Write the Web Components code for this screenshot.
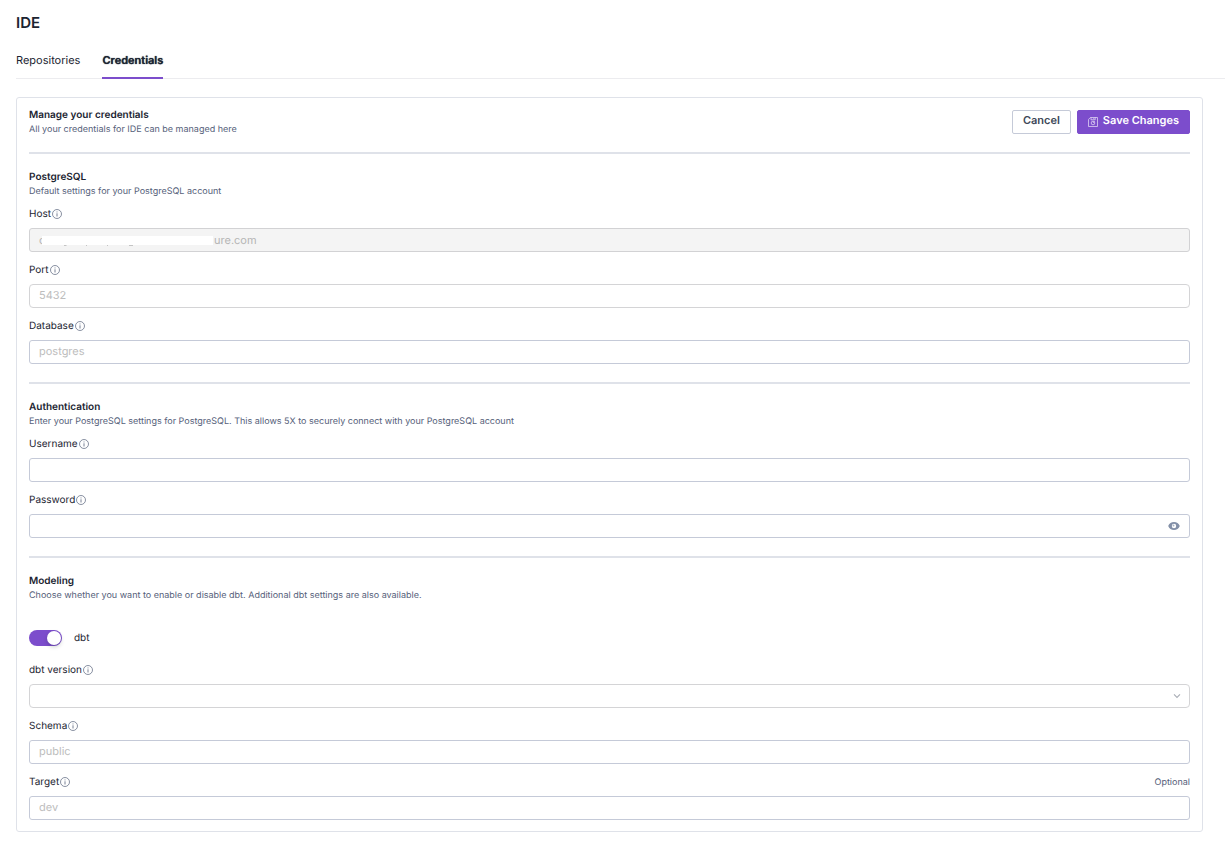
<!DOCTYPE html>
<html lang="en">
<head>
<meta charset="utf-8">
<meta name="viewport" content="width=device-width, initial-scale=1">
<title>IDE</title>
<style>
  body {
    margin: 0;
    background: #fff;
    color: #1b2431;
    font: 11px/14px Inter, "Liberation Sans", sans-serif;
    text-rendering: geometricPrecision;
    --accent: #7c4dcc;
    --muted: #56617a;
    --rule: #dfe2e9;
    --border: #c5cad8;
  }
</style>
</head>
<body>
<ide-page></ide-page>

<script>
// ide-tabs: page level navigation
class IdeTabs extends HTMLElement {
  constructor() {
    super();
    this.attachShadow({ mode: "open" }).innerHTML = `
      <style>
        :host { display: block; border-bottom: 1px solid #ececef; }
        nav { display: flex; gap: 22px; }
        a {
          color: inherit;
          text-decoration: none;
          line-height: 16px;
          padding: 8px 0 9px;
          margin-bottom: -1px;
          border-bottom: 2px solid transparent;
        }
        a[aria-current] {
          font-weight: 600;
          text-shadow: 0 0 1px currentColor;
          border-color: var(--accent);
        }
      </style>
      <nav>
        <a href="#repositories">Repositories</a>
        <a href="#credentials" aria-current="page">Credentials</a>
      </nav>
    `;
  }
}

// ide-button: default or primary, icon goes in the "icon" slot
class IdeButton extends HTMLElement {
  constructor() {
    super();
    this.attachShadow({ mode: "open" }).innerHTML = `
      <style>
        :host { display: block; }
        button {
          display: flex;
          align-items: center;
          gap: 5px;
          height: 24px;
          box-sizing: border-box;
          padding: 0 10px 4px;
          border: 1px solid var(--border);
          border-radius: 2px;
          background: #fff;
          color: #3d4858;
          font: inherit;
          font-weight: 600;
          text-rendering: inherit;
          cursor: pointer;
        }
        :host([primary]) button {
          background: var(--accent);
          border-color: var(--accent);
          color: #fff;
        }
        ::slotted(svg) { display: block; margin-top: 4px; }
      </style>
      <button type="button"><slot name="icon"></slot><slot></slot></button>
    `;
  }
}

// ide-section: divider, heading and description above a column of fields
class IdeSection extends HTMLElement {
  connectedCallback() {
    this.attachShadow({ mode: "open" }).innerHTML = `
      <style>
        :host { display: block; border-top: 2px solid var(--rule); padding-top: 16px; }
        h2 { margin: 0; font-size: 10px; line-height: 15px; font-weight: 600; }
        p { margin: 0 0 7px; font-size: 9px; line-height: 13px; color: var(--muted); }
        .fields { display: flex; flex-direction: column; gap: 9px; }
      </style>
      <h2>${this.getAttribute("heading")}</h2>
      <p>${this.getAttribute("description")}</p>
      <div class="fields"><slot></slot></div>
    `;
  }
}

// ide-field: labelled text, password or select control
class IdeField extends HTMLElement {
  connectedCallback() {
    this.attachShadow({ mode: "open" }).innerHTML = `
      <style>
        :host { display: block; }
        .top { display: flex; align-items: center; height: 18px; margin-bottom: 5px; }
        label { font-size: 10px; }
        .info { display: block; margin-left: 1px; color: var(--muted); }
        .optional { margin-left: auto; font-size: 9px; line-height: 16px; padding-top: 2px; color: var(--muted); }
        .control { display: grid; align-items: center; position: relative; }
        input, select {
          appearance: none;
          box-sizing: border-box;
          width: 100%;
          height: 24px;
          margin: 0;
          padding: 0 9px 2px;
          border: 1px solid var(--border);
          border-radius: 3px;
          background: #fff;
          color: inherit;
          font: inherit;
          text-rendering: inherit;
        }
        :host([soft]) input, select { border-color: #d4d4d6; border-radius: 4px; }
        input::placeholder { color: #bdbdbd; opacity: 1; }
        input:disabled { background: #f4f4f4; border-color: #d2d2d4; color: #b4b4b4; }
        :host([masked]) input { padding-left: 184px; padding-bottom: 0; }
        .mask { position: absolute; left: 10px; top: 5px; color: #b4b4b4; pointer-events: none; }
        .mask span { display: block; }
        .mask svg { position: absolute; left: 3px; top: 3px; }
        .end { position: absolute; right: 9px; display: flex; color: #8390a8; }
        button { padding: 0; border: 0; background: none; color: inherit; cursor: pointer; }
        .end svg { display: block; }
        .chevron { right: 8px; pointer-events: none; color: #a9adb5; }
      </style>
      <div class="top">
        <label for="control">${this.getAttribute("label")}</label>
        <svg class="info" width="10" height="10" viewBox="0 0 10 10" fill="none" stroke="currentColor" aria-hidden="true">
          <circle cx="5" cy="5" r="4.5" stroke-width=".7"/>
          <path d="M5 4.300v3.200M5 2.500v.9" stroke-width=".8"/>
        </svg>
        ${this.hasAttribute("optional") ? `<span class="optional">Optional</span>` : ""}
      </div>
      <div class="control">${this._renderControl()}</div>
    `;
  }

  _renderControl() {
    if (this.hasAttribute("select")) {
      return `
        <select id="control"><option></option></select>
        <span class="end chevron">
          <svg width="10" height="8" viewBox="0 0 10 8" fill="none" stroke="currentColor" stroke-width="1.1">
            <path d="M2 2.400l3 3 3-3"/>
          </svg>
        </span>
      `;
    }

    const type = this.getAttribute("type") || "text";
    const input = `<input id="control" type="${type}"
      placeholder="${this.getAttribute("placeholder") || ""}"
      value="${this.getAttribute("value") || ""}"
      ${this.hasAttribute("disabled") ? "disabled" : ""}>`;

    if (this.hasAttribute("masked")) {
      return `${input}
        <div class="mask">
          <span>c</span>
          <svg width="171" height="12" viewBox="0 0 171 12">
            <path d="M0 0h171v9H0z" fill="#fff"/>
            <path d="M22 9.500h2.500M44 9.500h1M65 9.500h1M87 9.500h4" stroke="#c4c4c4"/>
          </svg>
        </div>
      `;
    }

    if (type === "password") {
      return `${input}
        <span class="end">
          <button type="button" aria-label="Show password">
            <svg width="14" height="10" viewBox="0 0 14 10">
              <path fill="currentColor" fill-rule="evenodd" d="M7 1C4.300 1 2.200 2.500 1.200 5c1 2.500 3.100 4 5.800 4s4.800-1.500 5.800-4C11.800 2.500 9.700 1 7 1zm0 1.800a2.200 2.200 0 1 1 0 4.400 2.200 2.200 0 0 1 0-4.400z"/>
              <circle cx="6.500" cy="4.500" r=".9" fill="currentColor" opacity=".7"/>
            </svg>
          </button>
        </span>
      `;
    }

    return input;
  }
}

// ide-switch: on/off toggle with its text on the right
class IdeSwitch extends HTMLElement {
  constructor() {
    super();
    this.attachShadow({ mode: "open" }).innerHTML = `
      <style>
        :host { display: block; padding: 21px 0 6px; }
        label {
          display: flex;
          align-items: center;
          gap: 12px;
          width: max-content;
          height: 16px;
          font-size: 10px;
        }
        input {
          appearance: none;
          display: flex;
          box-sizing: border-box;
          width: 33px;
          height: 16px;
          margin: 0;
          padding: 1px;
          border-radius: 8px;
          background: #bfbfbf;
        }
        input::before {
          content: "";
          width: 14px;
          height: 14px;
          border-radius: 50%;
          background: #fff;
          box-shadow: 0 2px 4px rgba(0, 35, 11, 0.2);
        }
        input:checked { background: var(--accent); justify-content: flex-end; }
      </style>
      <label><input type="checkbox" role="switch" checked><slot></slot></label>
    `;
  }
}

class IdePage extends HTMLElement {
  constructor() {
    super();
    this.attachShadow({ mode: "open" }).innerHTML = `
      <style>
        :host { display: block; padding: 13px 0 32px 16px; }
        h1 { margin: 0 0 11px; font-size: 15px; line-height: 20px; font-weight: 600; }
        .card {
          margin: 18px 22px 0 0;
          padding: 10px 12px 11px;
          border: 1px solid var(--rule);
          border-radius: 3px;
          display: flex;
          flex-direction: column;
          gap: 18px;
        }
        header {
          display: flex;
          align-items: center;
          justify-content: space-between;
          margin-bottom: -2px;
        }
        h2 { margin: 0; font-size: 10px; line-height: 15px; font-weight: 600; }
        p { margin: 0; font-size: 9px; line-height: 13px; color: var(--muted); }
        .actions { display: flex; gap: 6px; }
      </style>
      <h1>IDE</h1>
      <ide-tabs></ide-tabs>
      <div class="card">
        <header>
          <div>
            <h2>Manage your credentials</h2>
            <p>All your credentials for IDE can be managed here</p>
          </div>
          <div class="actions">
            <ide-button>Cancel</ide-button>
            <ide-button primary>
              <svg slot="icon" width="10" height="10" viewBox="0 0 10 10" fill="none" stroke="#fff" stroke-width=".7" opacity=".85">
                <path d="M2.400 .5h7.100v9H.5V2.400z"/>
                <path d="M3 .5v2.300h4.200V.5M5.800 1v1.200"/>
                <circle cx="5" cy="6" r="1.800"/>
                <path d="M5 6l1.500-1.800"/>
              </svg>Save Changes</ide-button>
          </div>
        </header>

        <ide-section heading="PostgreSQL" description="Default settings for your PostgreSQL account">
          <ide-field label="Host" value="ure.com" masked disabled></ide-field>
          <ide-field label="Port" placeholder="5432" soft></ide-field>
          <ide-field label="Database" placeholder="postgres"></ide-field>
        </ide-section>

        <ide-section heading="Authentication" description="Enter your PostgreSQL settings for PostgreSQL. This allows 5X to securely connect with your PostgreSQL account">
          <ide-field label="Username"></ide-field>
          <ide-field label="Password" type="password"></ide-field>
        </ide-section>

        <ide-section heading="Modeling" description="Choose whether you want to enable or disable dbt. Additional dbt settings are also available.">
          <ide-switch>dbt</ide-switch>
          <ide-field label="dbt version" select></ide-field>
          <ide-field label="Schema" placeholder="public"></ide-field>
          <ide-field label="Target" placeholder="dev" optional></ide-field>
        </ide-section>
      </div>
    `;
  }
}

customElements.define("ide-tabs", IdeTabs);
customElements.define("ide-button", IdeButton);
customElements.define("ide-section", IdeSection);
customElements.define("ide-field", IdeField);
customElements.define("ide-switch", IdeSwitch);
customElements.define("ide-page", IdePage);
</script>
</body>
</html>
